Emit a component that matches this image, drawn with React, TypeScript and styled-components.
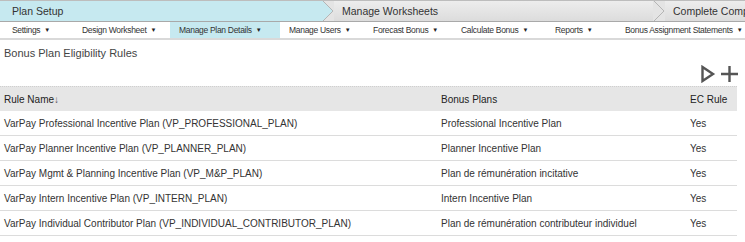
import styled, { createGlobalStyle } from "styled-components";

const steps = [
  { label: "Plan Setup", active: true, width: 322 },
  { label: "Manage Worksheets", active: false, width: 331 },
  { label: "Complete Compensation", active: false, width: 200 },
];

const menus = [
  { label: "Settings", width: 70 },
  { label: "Design Worksheet", width: 97 },
  { label: "Manage Plan Details", width: 110, active: true },
  { label: "Manage Users", width: 84 },
  { label: "Forecast Bonus", width: 88 },
  { label: "Calculate Bonus", width: 94 },
  { label: "Reports", width: 70 },
  { label: "Bonus Assignment Statements", width: 140 },
];

const rules = [
  {
    name: "VarPay Professional Incentive Plan (VP_PROFESSIONAL_PLAN)",
    plan: "Professional Incentive Plan",
  },
  {
    name: "VarPay Planner Incentive Plan (VP_PLANNER_PLAN)",
    plan: "Planner Incentive Plan",
  },
  {
    name: "VarPay Mgmt & Planning Incentive Plan (VP_M&P_PLAN)",
    plan: "Plan de rémunération incitative",
  },
  {
    name: "VarPay Intern Incentive Plan (VP_INTERN_PLAN)",
    plan: "Intern Incentive Plan",
  },
  {
    name: "VarPay Individual Contributor Plan (VP_INDIVIDUAL_CONTRIBUTOR_PLAN)",
    plan: "Plan de rémunération contributeur individuel",
  },
];

const ACTIVE = "#c6e9f0";
const IDLE = "#e4e4e4";

const Chevron = ({ from, to }: { from: string; to: string }) => (
  <ChevronSvg width="12" height="20" viewBox="0 0 12 20">
    <rect x="0" y="0" width="12" height="20" fill={to} />
    <polygon points="0,0 1,0 11,10 1,20 0,20" fill={from} />
    <polyline points="1,0 11,10 1,20" fill="none" stroke="#b5b5b5" strokeWidth="1" />
  </ChevronSvg>
);

const App = () => {
  return (
    <>
      <GlobalStyle />
      <Page>
        <StepBar>
          {steps.map((s, i) => (
            <StepWrap key={s.label} $width={s.width}>
              {i > 0 && (
                <Chevron
                  from={steps[i - 1].active ? ACTIVE : IDLE}
                  to={s.active ? ACTIVE : IDLE}
                />
              )}
              <Step $active={s.active} $first={i === 0}>
                {s.label}
              </Step>
            </StepWrap>
          ))}
        </StepBar>
        <MenuBar>
          {menus.map((m) => (
            <MenuItem key={m.label} $width={m.width} $active={m.active}>
              {m.label}
              <Caret>▼</Caret>
            </MenuItem>
          ))}
        </MenuBar>
        <Title>Bonus Plan Eligibility Rules</Title>
        <Actions>
          <IconButton aria-label="Run">
            <svg width="16" height="18" viewBox="0 0 16 18">
              <polygon
                points="2.5,2 13,9 2.5,16"
                fill="none"
                stroke="#555"
                strokeWidth="2.4"
              />
            </svg>
          </IconButton>
          <IconButton aria-label="Add">
            <svg width="19" height="18" viewBox="0 0 19 18">
              <path d="M9.5 1V17M1 9H18" stroke="#555" strokeWidth="2.4" />
            </svg>
          </IconButton>
        </Actions>
        <Table>
          <HeadRow>
            <Cell>
              Rule Name<SortArrow>↓</SortArrow>
            </Cell>
            <Cell>Bonus Plans</Cell>
            <Cell>EC Rule</Cell>
          </HeadRow>
          {rules.map((r) => (
            <Row key={r.name}>
              <Cell>{r.name}</Cell>
              <Cell>{r.plan}</Cell>
              <Cell>Yes</Cell>
            </Row>
          ))}
        </Table>
      </Page>
    </>
  );
};

export default App;

const GlobalStyle = createGlobalStyle`
  body {
    margin: 0;
    background: #fff;
    font-family: "Liberation Sans", Arial, sans-serif;
    color: #333;
  }
`;

const Page = styled.div`
  width: 745px;
  overflow: hidden;
`;

const StepBar = styled.div`
  display: flex;
  height: 22px;
  box-sizing: border-box;
  border-top: 1px solid #bdbdbd;
  border-bottom: 1px solid #a9a9a9;
  white-space: nowrap;
  overflow: hidden;
`;

const StepWrap = styled.div<{ $width: number }>`
  display: flex;
  flex: 0 0 ${(p) => p.$width}px;
  height: 100%;
`;

const ChevronSvg = styled.svg`
  display: block;
  flex: 0 0 12px;
`;

const Step = styled.div<{ $active?: boolean; $first?: boolean }>`
  flex: 1;
  display: flex;
  align-items: center;
  padding-left: ${(p) => (p.$first ? "12px" : "8px")};
  font-size: 10.5px;
  color: #333;
  background: ${(p) =>
    p.$active ? ACTIVE : "linear-gradient(#ededed, #dcdcdc)"};
`;

const MenuBar = styled.div`
  display: flex;
  height: 16px;
  padding-left: 3px;
  border-bottom: 2px solid #d9d9d9;
  white-space: nowrap;
  overflow: hidden;
`;

const MenuItem = styled.div<{ $width: number; $active?: boolean }>`
  flex: 0 0 ${(p) => p.$width}px;
  display: flex;
  align-items: center;
  padding-left: 9px;
  box-sizing: border-box;
  font-size: 8.5px;
  letter-spacing: -0.3px;
  color: #333;
  background: ${(p) => (p.$active ? ACTIVE : "transparent")};
`;

const Caret = styled.span`
  font-size: 6px;
  margin-left: 4px;
  color: #222;
`;

const Title = styled.div`
  font-size: 11px;
  color: #444;
  padding: 7px 0 0 4px;
  height: 14px;
`;

const Actions = styled.div`
  display: flex;
  justify-content: flex-end;
  gap: 4px;
  padding: 4px 6px 3px 0;
`;

const IconButton = styled.span`
  display: flex;
  align-items: center;
`;

const Table = styled.div`
  width: 737px;
`;

const HeadRow = styled.div`
  display: grid;
  grid-template-columns: 437px 249px 1fr;
  height: 25px;
  align-items: center;
  background: #e6e6e6;
  border-top: 1px dotted #cfcfcf;
  box-sizing: border-box;
  font-size: 10px;
  color: #222;
`;

const SortArrow = styled.span`
  font-size: 10px;
  color: #555;
`;

const Row = styled.div`
  display: grid;
  grid-template-columns: 437px 249px 1fr;
  height: 24px;
  align-items: center;
  border-bottom: 1px solid #dcdcdc;
  font-size: 10px;
  color: #333;
`;

const Cell = styled.div`
  padding-left: 4px;
  white-space: nowrap;
`;
